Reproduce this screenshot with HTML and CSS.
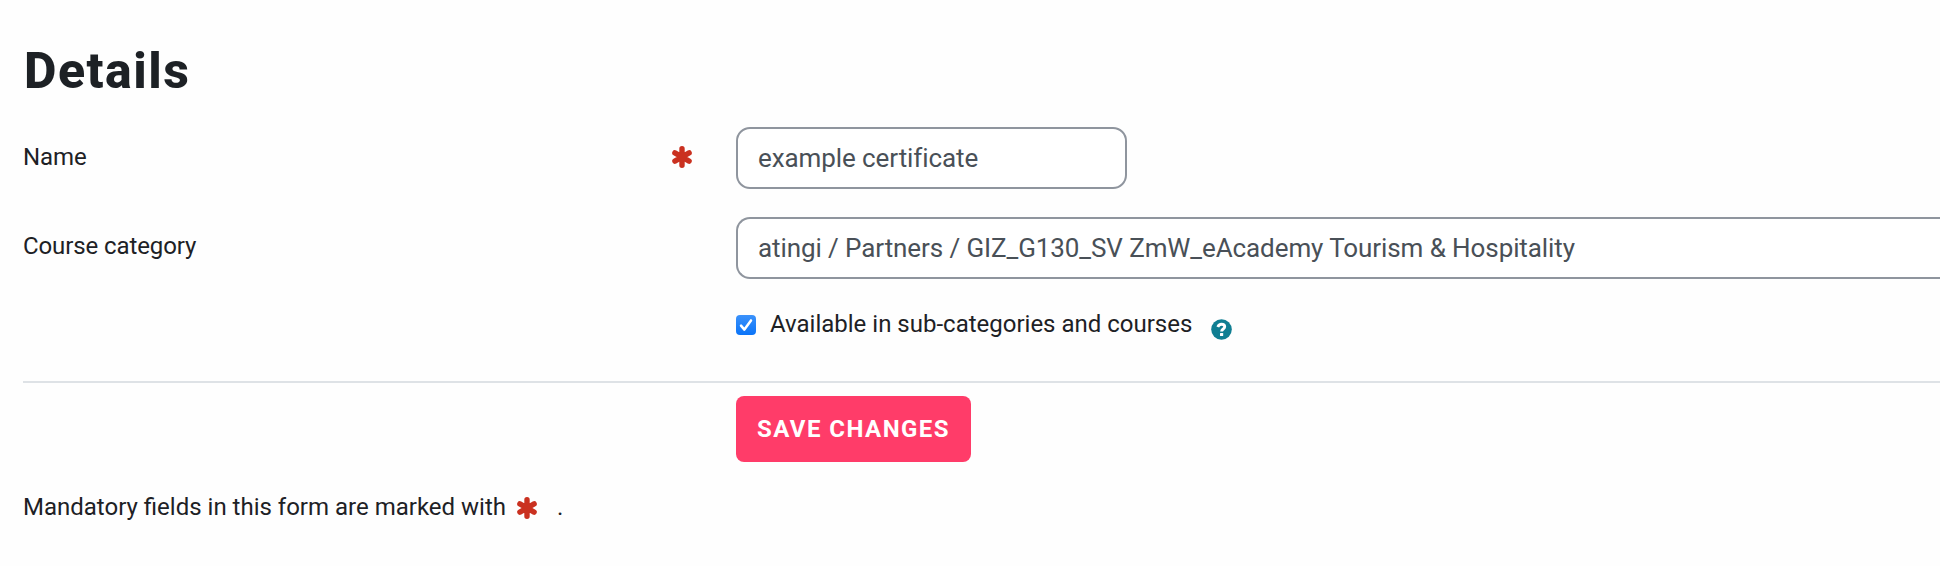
FILE: index.html
```html
<!DOCTYPE html>
<html lang="en">
  <head>
    <meta charset="utf-8">
    <title>Certificate details</title>
    <link rel="stylesheet" href="styles.css">
  </head>
  <body>
    <svg width="0" height="0" class="symbols">
      <symbol id="asterisk" viewBox="0 0 20 22">
        <path d="M10 2.8v16.4M2.9 6.9l14.2 8.2M17.1 6.9L2.9 15.1" fill="none" stroke="#ca3120" stroke-width="5.4" stroke-linecap="round"/>
      </symbol>
    </svg>
    <form class="mform">
      <h2 class="title">Details</h2>

      <div class="row">
        <div class="col-label">
          <label class="label-name" for="name">Name</label>
          <svg class="req"><use href="#asterisk"/></svg>
        </div>
        <input type="text" id="name" class="control name-control" value="example certificate">
      </div>

      <div class="row">
        <div class="col-label">
          <label class="label-category" for="category">Course category</label>
        </div>
        <select id="category" class="control category-control">
          <option>atingi / Partners / GIZ_G130_SV ZmW_eAcademy Tourism &amp; Hospitality</option>
        </select>
      </div>

      <div class="row check-row">
        <div class="col-label"></div>
        <label class="check">
          <svg class="checkbox" viewBox="0 0 20 20">
            <defs>
              <linearGradient id="blue" x1="0" y1="0" x2="0" y2="1">
                <stop offset="0" stop-color="#3b92fb"/>
                <stop offset="1" stop-color="#0a74f8"/>
              </linearGradient>
            </defs>
            <rect width="20" height="20" rx="4" fill="url(#blue)"/>
            <path d="M5 10.6l3.4 4L15 5.4" fill="none" stroke="#fff" stroke-width="2.5" stroke-linecap="round" stroke-linejoin="round"/>
          </svg>
          <span class="check-text">Available in sub-categories and courses</span>
        </label>
        <svg class="help" viewBox="0 0 21 21">
          <circle cx="10.5" cy="10.5" r="10.3" fill="#0f7e92"/>
          <path d="M6.8 8C7.6 6 8.8 5.3 10.5 5.3c1.9 0 3.2 1 3.2 2.5 0 2.2-3.1 2.2-3.1 4.6" fill="none" stroke="#fff" stroke-width="2.9"/>
          <rect x="9" y="13.9" width="3.2" height="3.1" rx=".5" fill="#fff"/>
        </svg>
      </div>

      <div class="row actions">
        <div class="col-label"></div>
        <button type="button" class="btn-save">SAVE CHANGES</button>
      </div>

      <div class="mandatory">
        <span class="mandatory-text">Mandatory fields in this form are marked with</span>
        <svg class="req"><use href="#asterisk"/></svg>
        <span class="dot">.</span>
      </div>
    </form>
  </body>
</html>
```
FILE: styles.css
```css
*{
  box-sizing: border-box;
}
body{
  margin: 0;
  background: #fefefe;
  color: #1d2125;
  font-family: Roboto, "Noto Sans", sans-serif;
  font-size: 24px;
  line-height: 36px;
}
.symbols{
  position: absolute;
}
.mform{
  padding: 41px 0 0 23px;
}
.title{
  margin: 0 0 26px;
  padding-left: 1px;
  font-size: 50px;
  line-height: 60px;
  font-weight: 800;
  letter-spacing: 1.5px;
}
.row{
  display: flex;
  align-items: flex-start;
  margin-bottom: 28px;
}
.col-label{
  display: flex;
  justify-content: space-between;
  flex: none;
  width: 713px;
  padding: 11px 44px 0 0;
  letter-spacing: -0.1px;
}
.label-name{
  margin-top: 1px;
}
.req{
  flex: none;
  width: 20px;
  height: 22px;
  margin-top: 8px;
}
.control{
  appearance: none;
  height: 62px;
  margin: 0;
  padding: 0 20px;
  border: 2px solid #8f959e;
  border-radius: 14px;
  background: #fff;
  color: #495057;
  font-family: inherit;
  font-size: 26px;
  letter-spacing: -0.09px;
}
.name-control{
  width: 391px;
}
/* runs off the right edge of the page */
.category-control{
  flex: 1;
  border-right: 0;
  border-radius: 14px 0 0 14px;
}
.check-row{
  margin-bottom: 0;
  height: 76px;
  border-bottom: 2px solid #dee2e6;
}
.check-row .col-label, .actions .col-label{
  padding: 0;
}
.check{
  display: flex;
  align-items: flex-start;
}
.check-text{
  margin-top: -1px;
}
.checkbox{
  width: 20px;
  height: 20px;
  margin: 8px 14px 0 0;
}
.help{
  width: 21px;
  height: 21px;
  margin: 12px 0 0 19px;
}
.actions{
  padding-top: 13px;
  margin-bottom: 27px;
}
.btn-save{
  width: 235px;
  height: 66px;
  padding: 0;
  border: 0;
  border-radius: 8px;
  background: #ff3c69;
  color: #fff;
  font-family: inherit;
  font-size: 24px;
  font-weight: 700;
  letter-spacing: 1.45px;
}
.mandatory{
  display: flex;
}
.mandatory .req{
  margin: 8px 20px 0 11px;
}
```
